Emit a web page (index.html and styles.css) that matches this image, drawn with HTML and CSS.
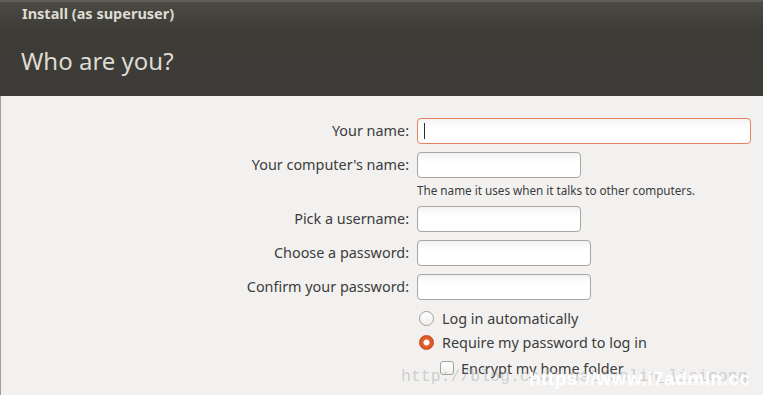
FILE: index.html
```html
<!DOCTYPE html>
<html lang="en">
<head>
    <meta charset="UTF-8">
    <title>Who are you?</title>
    <link rel="stylesheet" href="styles.css">
</head>
<body>

<div class="window">
    <div class="header">
        <div class="window-title">Install (as superuser)</div>
        <h1>Who are you?</h1>
    </div>

    <div class="content">
        <div class="form-grid">
            <label for="name">Your name:</label>
            <div class="field"><input type="text" id="name" class="input-wide focused"><span class="caret"></span></div>

            <label for="host">Your computer's name:</label>
            <div class="field"><input type="text" id="host" class="input-short"></div>
            <div></div>
            <div class="hint">The name it uses when it talks to other computers.</div>

            <label for="user">Pick a username:</label>
            <div class="field"><input type="text" id="user" class="input-short"></div>

            <label for="pass">Choose a password:</label>
            <div class="field"><input type="password" id="pass" class="input-mid"></div>

            <label for="pass2">Confirm your password:</label>
            <div class="field"><input type="password" id="pass2" class="input-mid"></div>

            <div></div>
            <div class="options">
                <div class="option">
                    <span class="radio"></span>
                    <span>Log in automatically</span>
                </div>
                <div class="option">
                    <span class="radio checked"></span>
                    <span>Require my password to log in</span>
                </div>
                <div class="option sub-option">
                    <span class="checkbox"></span>
                    <span>Encrypt my home folder</span>
                </div>
            </div>
        </div>

        <div class="watermark">http://blog.csdn.net/colin_lisicong</div>
        <div class="watermark-site">https://www.i7admin.cc</div>
    </div>
</div>

</body>
</html>
```

FILE: styles.css
```css
* {
    box-sizing: border-box;
}

body {
    margin: 0;
    font-family: 'Noto Sans', 'Open Sans', sans-serif;
    background-color: #f2f1f0;
    color: #3c3c3c;
}

.window {
    width: 763px;
    height: 395px;
    overflow: hidden;
}

.header {
    height: 96px;
    background: linear-gradient(#4c4a45 0px, #3d3c37 27px, #3c3b37 100%);
    border-top: 2px solid #5f5d58;
    padding: 2px 0 0 22px;
    color: #dfdbd2;
}

.window-title {
    font-size: 14.5px;
    font-weight: bold;
    line-height: 20px;
    margin-top: -1px;
}

.header h1 {
    margin: 23px 0 0 -1px;
    font-size: 24px;
    font-weight: normal;
    line-height: 30px;
}

.content {
    position: relative;
    height: 299px;
    border-left: 1px solid #a09f9b;
    padding: 22px 12px 0 0;
}

.form-grid {
    display: grid;
    grid-template-columns: 408px 1fr;
    column-gap: 8px;
    row-gap: 8px;
    align-items: center;
    font-size: 14.4px;
}

label {
    text-align: right;
    margin-top: -2px;
}

.field {
    position: relative;
    height: 26px;
}

input {
    height: 26px;
    border: 1px solid #a9a7a3;
    border-radius: 4px;
    background: linear-gradient(#f3f3f3, #ffffff 40%, #ffffff);
    font-family: inherit;
    font-size: 14px;
    outline: none;
}

.input-wide {
    width: 334px;
}

.input-short {
    width: 164px;
}

.input-mid {
    width: 174px;
}

input.focused {
    border-color: #e8835f;
}

.caret {
    position: absolute;
    left: 7px;
    top: 5px;
    width: 1px;
    height: 16px;
    background: #2c2c2c;
}

.hint {
    font-size: 11.7px;
    margin-top: -4px;
    margin-bottom: 0;
}

.options {
    display: flex;
    flex-direction: column;
    gap: 6px;
    margin-top: 1px;
}

.option {
    display: flex;
    align-items: center;
    gap: 8px;
    height: 18px;
    padding-left: 2px;
}

.sub-option {
    padding-left: 23px;
    gap: 7px;
    margin-top: 2px;
}

.radio {
    width: 15px;
    height: 15px;
    border-radius: 50%;
    border: 1px solid #a3a19d;
    background: linear-gradient(#ffffff, #f0efed);
}

.radio.checked {
    border-color: #c2491f;
    background: radial-gradient(circle, #ffffff 0, #ffffff 2.5px, #e05f2c 3.5px, #d6511f 100%);
}

.checkbox {
    width: 14px;
    height: 14px;
    border-radius: 3px;
    border: 1px solid #a3a19d;
    background: linear-gradient(#ffffff, #f0efed);
}

.watermark {
    position: absolute;
    left: 400px;
    top: 271px;
    font-family: 'Liberation Mono', monospace;
    font-size: 16.5px;
    color: rgba(160, 160, 160, 0.45);
}

.watermark-site {
    position: absolute;
    left: 528px;
    top: 272px;
    font-family: 'Liberation Sans', sans-serif;
    font-size: 19px;
    font-weight: bold;
    letter-spacing: 0.5px;
    color: #ffffff;
}
```
